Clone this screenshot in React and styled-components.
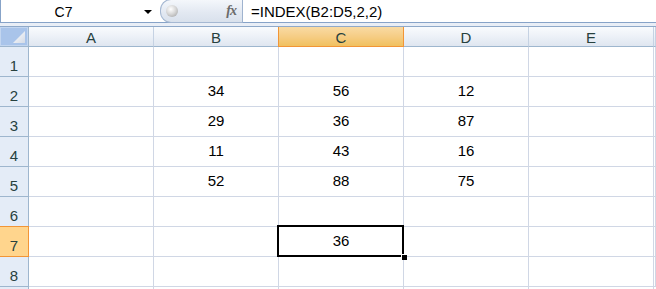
import React from "react";
import styled, { createGlobalStyle } from "styled-components";

const Global = createGlobalStyle`
  html, body { margin: 0; padding: 0; background: #fff; }
  body { font-family: "Liberation Sans", Arial, sans-serif; width: 656px; height: 289px; overflow: hidden; }
`;

const Page = styled.div`
  width: 656px;
  height: 289px;
  overflow: hidden;
  display: flex;
  flex-direction: column;
`;

const FormulaBar = styled.div`
  display: flex;
  height: 22px;
  border-top: 1px solid #87a3c8;
  border-bottom: 1px solid #87a3c8;
  border-left: 1px solid #87a3c8;
  background: #fff;
  flex-shrink: 0;
  margin-top: -1px;
`;

const NameBox = styled.div`
  width: 159px;
  display: flex;
  align-items: center;
  position: relative;
  font-size: 14px;
  color: #000;
  padding-top: 1px;
`;

const NameText = styled.span`
  flex: 1;
  text-align: center;
  padding-right: 18px;
`;

const DropArrow = styled.span`
  width: 0;
  height: 0;
  border-left: 4px solid transparent;
  border-right: 4px solid transparent;
  border-top: 4px solid #000;
  margin-right: 8px;
`;

const Capsule = styled.div`
  width: 83px;
  display: flex;
  align-items: center;
  justify-content: space-between;
  border-radius: 11px 0 0 11px;
  background: linear-gradient(to bottom, #f4f7fb 0%, #e3e9f2 55%, #d9e1ec 100%);
  border: 1px solid #a5b8d2;
  border-right: 1px solid #9fb3cf;
  box-sizing: border-box;
  margin: -1px 0;
  height: 24px;
  padding: 0 6px 0 5px;
`;

const Knob = styled.span`
  width: 12px;
  height: 12px;
  border-radius: 50%;
  background: radial-gradient(circle at 40% 35%, #ffffff 0%, #d8d8d8 45%, #9c9c9c 100%);
`;

const Fx = styled.span`
  font-family: "Liberation Serif", "Times New Roman", serif;
  font-style: italic;
  font-weight: bold;
  font-size: 14px;
  color: #6b6b6b;
  letter-spacing: -1px;
`;

const FormulaInput = styled.div`
  flex: 1;
  display: flex;
  align-items: center;
  padding-left: 8px;
  font-size: 15px;
  color: #000;
  padding-top: 1px;
`;

const Gap = styled.div`
  height: 3px;
  background: #e9eef6;
  border-bottom: 1px solid #8fa9c9;
  flex-shrink: 0;
`;

const Sheet = styled.div`
  display: grid;
  grid-template-columns: 29px repeat(5, 125px) 1fr;
  grid-template-rows: 20px repeat(8, 30px) 1fr;
  flex: 1;
`;

const Corner = styled.div`
  background: #a9c4ea;
  border-right: 1px solid #9eb6ce;
  border-bottom: 1px solid #9eb6ce;
  box-shadow: inset 0 0 0 1px #c3d6f0;
  display: flex;
  align-items: flex-end;
  justify-content: flex-end;
  padding: 0 3px 3px 0;
`;

const ColHead = styled.div`
  display: flex;
  align-items: center;
  justify-content: center;
  font-size: 15px;
  color: #27413e;
  border-right: 1px solid ${(p) => (p.$sel ? "#f29536" : "#c5d2e3")};
  border-bottom: 1px solid ${(p) => (p.$sel ? "#f29536" : "#9eb6ce")};
  box-shadow: ${(p) => (p.$sel ? "-1px 0 0 #f29536" : "none")};
  background: ${(p) =>
    p.$sel
      ? "linear-gradient(to bottom, #f9dba4 0%, #f6cd85 50%, #f1c15f 100%)"
      : "linear-gradient(to bottom, #f9fbfd 0%, #eef2f8 45%, #dfe6f0 100%)"};
  padding-top: 1px;
`;

const RowHead = styled.div`
  display: flex;
  align-items: flex-end;
  justify-content: center;
  padding-bottom: 2px;
  font-size: 15px;
  color: #27413e;
  background: ${(p) => (p.$sel ? "#ffd58d" : "#e4ecf7")};
  border-right: 1px solid ${(p) => (p.$sel ? "#f29536" : "#9eb6ce")};
  border-bottom: 1px solid ${(p) => (p.$sel ? "#f29536" : "#9eb6ce")};
  box-shadow: ${(p) => (p.$sel ? "0 -1px 0 #f29536" : "none")};
`;

const Cell = styled.div`
  position: relative;
  display: flex;
  align-items: flex-end;
  justify-content: center;
  padding-bottom: 7px;
  font-size: 15px;
  color: #000;
  border-right: 1px solid #d0d7e5;
  border-bottom: 1px solid #d0d7e5;
  background: #fff;
`;

const Selection = styled.div`
  position: absolute;
  z-index: 2;
  top: -2px;
  left: -2px;
  right: -1px;
  bottom: -1px;
  border: 2px solid #000;
  pointer-events: none;
`;

const FillHandle = styled.div`
  position: absolute;
  right: -5px;
  bottom: -5px;
  width: 5px;
  height: 5px;
  background: #000;
  border: 1px solid #fff;
  border-width: 1px 0 0 1px;
`;

const Spacer = styled.div`
  background: #fff;
`;

const cols = ["A", "B", "C", "D", "E"];
const data = {
  2: ["", "34", "56", "12", ""],
  3: ["", "29", "36", "87", ""],
  4: ["", "11", "43", "16", ""],
  5: ["", "52", "88", "75", ""],
  7: ["", "", "36", "", ""],
};

export default function App() {
  const rows = [1, 2, 3, 4, 5, 6, 7, 8];
  return (
    <Page>
      <Global />
      <FormulaBar>
        <NameBox>
          <NameText>C7</NameText>
          <DropArrow />
        </NameBox>
        <Capsule>
          <Knob />
          <Fx>fx</Fx>
        </Capsule>
        <FormulaInput>=INDEX(B2:D5,2,2)</FormulaInput>
      </FormulaBar>
      <Gap />
      <Sheet>
        <Corner>
          <svg width="12" height="12" viewBox="0 0 12 12">
            <defs>
              <linearGradient id="tri" x1="0" y1="0" x2="1" y2="1">
                <stop offset="0" stopColor="#ffffff" />
                <stop offset="1" stopColor="#d4dbe6" />
              </linearGradient>
            </defs>
            <polygon points="12,0 12,12 0,12" fill="url(#tri)" />
          </svg>
        </Corner>
        {cols.map((c) => (
          <ColHead key={c} $sel={c === "C"}>
            {c}
          </ColHead>
        ))}
        <ColHead />
        {rows.map((r) => (
          <React.Fragment key={r}>
            <RowHead $sel={r === 7}>{r}</RowHead>
            {cols.map((c, i) => {
              const v = data[r] ? data[r][i] : "";
              const sel = r === 7 && c === "C";
              return (
                <Cell key={c}>
                  {v}
                  {sel && (
                    <Selection>
                      <FillHandle />
                    </Selection>
                  )}
                </Cell>
              );
            })}
            <Cell />
          </React.Fragment>
        ))}
        <RowHead />
        {cols.map((c) => (
          <Cell key={c} />
        ))}
        <Spacer />
      </Sheet>
    </Page>
  );
}
